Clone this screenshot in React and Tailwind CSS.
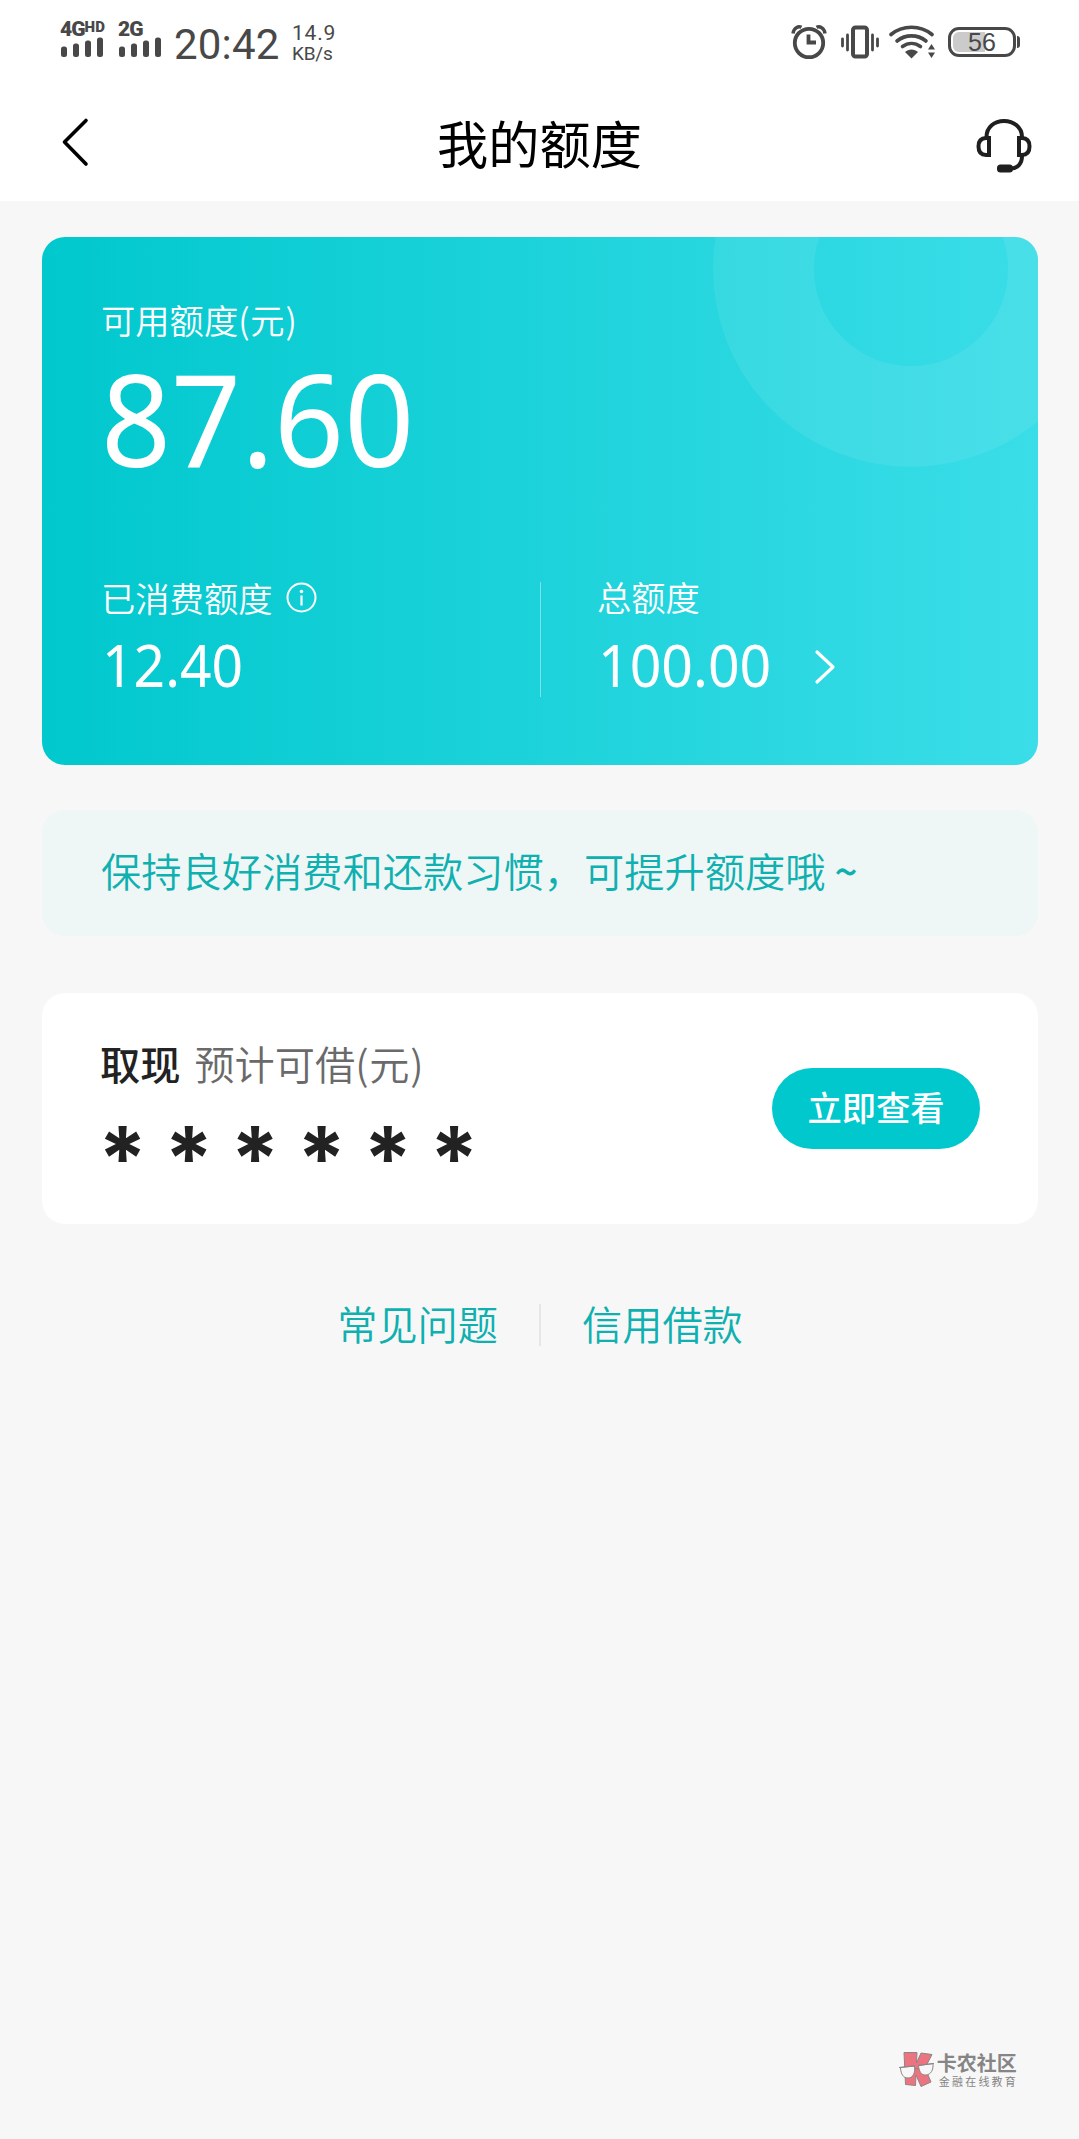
const SignalBars = () => (
  <svg width="44" height="20" viewBox="0 0 44 20" fill="#484848">
    <rect x="1" y="9.5" width="6" height="10.5" rx="2.5" />
    <rect x="13" y="6.5" width="6" height="13.5" rx="2.5" />
    <rect x="25" y="3.5" width="6" height="16.5" rx="2.5" />
    <rect x="37" y="0.5" width="6" height="19.5" rx="2.5" />
  </svg>
)

const AlarmIcon = () => (
  <svg width="36" height="36" viewBox="0 0 36 36" fill="none" stroke="#484848">
    <circle cx="18" cy="19" r="14.2" strokeWidth="3.8" />
    <path d="M17.5 10.5V18.5H25" strokeWidth="3.8" />
    <path d="M2 9.5C2.5 4.5 7 1.5 10.5 3.2M34 9.5C33.5 4.5 29 1.5 25.5 3.2" strokeWidth="3.4" />
  </svg>
)

const VibrateIcon = () => (
  <svg width="38" height="36" viewBox="0 0 38 36" fill="none" stroke="#484848">
    <rect x="12" y="3.5" width="14" height="29" rx="2.5" strokeWidth="4" />
    <path d="M1.5 15v7M36.5 15v7M6.5 11v15M31.5 11v15" strokeWidth="2.8" strokeLinecap="round" />
  </svg>
)

const WifiIcon = () => (
  <svg width="47" height="36" viewBox="0 0 47 36" fill="none" stroke="#484848">
    <path d="M2 10.5C13.5 0.8 31.5 0.8 43 10.5" strokeWidth="3.6" strokeLinecap="round" />
    <path d="M8 17C16.5 10.2 28.5 10.2 37 17" strokeWidth="3.6" strokeLinecap="round" />
    <path d="M13.5 22.5C19 18.5 26 18.5 31.5 22.5" strokeWidth="3.6" strokeLinecap="round" />
    <path d="M16 28C19.5 24.5 25.5 24.5 29 28L22.5 34.5Z" fill="#484848" stroke="none" />
    <path d="M39 25.5L42.5 20L46 25.5ZM39 28.5L42.5 34L46 28.5Z" fill="#484848" stroke="none" />
  </svg>
)

const HeadsetIcon = () => (
  <svg width="58" height="56" viewBox="0 0 58 56" fill="none" stroke="#1f1f1f" strokeWidth="4">
    <path d="M11.5 19C11.5 9 19.5 3 29 3S47 9 47 19" />
    <path d="M14 20H11C6 20 3.5 23 3.5 28.5S6 37 11 37H14Z" />
    <path d="M44 20H47C52 20 54.5 23 54.5 28.5S52 37 47 37H44Z" />
    <path d="M47 38C47 46 42.5 50 36 50.5" />
    <rect x="22" y="46.5" width="16" height="8" rx="3.5" fill="#1f1f1f" stroke="none" />
  </svg>
)

const InfoIcon = () => (
  <svg width="31" height="31" viewBox="0 0 31 31" fill="none" stroke="#fff">
    <circle cx="15.5" cy="15.5" r="14" strokeWidth="2" />
    <path d="M15.5 13.5V23.5" strokeWidth="2.2" />
    <circle cx="15.5" cy="9.5" r="1.8" fill="#fff" stroke="none" />
  </svg>
)

const GlassesLogo = () => (
  <svg width="36" height="38" viewBox="0 0 36 38" stroke="#8d8585" strokeWidth="1">
    <path d="M5 1.5H18L17.5 12L22 2L33 3.5L26 17L32 31L22 35.5L17 24L16.5 34.5L6.5 33.5Z" fill="#ec7380" />
    <path d="M1 16.5L15.5 15C16.5 22 14 27 9 27S2 23 1.5 17Z" fill="#f7f7f7" />
    <path d="M19.5 14.5L34 12.5C34.5 19 32 23.5 27 24S20 20 19.5 14.5Z" fill="#f7f7f7" />
    <path d="M0 16.5L16 15M19 14.5L35 12.5M15.5 18L20 17.5" fill="none" />
  </svg>
)

const StatusBar = () => (
  <div className="flex h-[84px] items-start justify-between pl-[60px] pr-[59px] text-[#484848]">
    <div className="flex items-start">
      <div className="flex w-[58px] flex-col pt-[21px]">
        <div className="flex h-4 items-start font-[Roboto] text-[21px] leading-[17px] font-black tracking-[-1px]">
          4G<span className="text-[15px] leading-[12px] tracking-[0.3px]">HD</span>
        </div>
        <SignalBars />
      </div>
      <div className="flex w-[56px] flex-col pt-[21px]">
        <div className="h-4 font-[Roboto] text-[21px] leading-[17px] font-black tracking-[-1px]">2G</div>
        <SignalBars />
      </div>
      <div className="w-[118px] pt-5 font-[Roboto] text-[42px] leading-[49px] tracking-[0.2px]">20:42</div>
      <div className="pt-[22px] font-[Roboto]">
        <div className="text-[21px] leading-[23px] tracking-[0.8px]">14.9</div>
        <div className="text-[19px] leading-[17px] tracking-[-0.2px]">KB/s</div>
      </div>
    </div>
    <div className="flex items-start pt-6">
      <div className="w-[50px]"><AlarmIcon /></div>
      <div className="w-[48px]"><VibrateIcon /></div>
      <div className="w-[59px]"><WifiIcon /></div>
      <div className="flex items-center pt-[3px]">
        <div className="flex h-[30px] w-[68px] items-center rounded-[11px] border-[3px] border-[#484848] p-0.5">
          <div className="h-full w-[32px] rounded-l-[6px] bg-[#cbcbcb]" />
          <span className="-ml-[17px] font-['Liberation_Sans'] text-[25px] leading-[26px]">56</span>
        </div>
        <div className="ml-px h-3 w-[3px] rounded-r-full bg-[#484848]" />
      </div>
    </div>
  </div>
)

const App = () => {
  return (
    <div className="flex min-h-[2139px] w-full flex-col bg-[#f7f7f7] font-['Noto_Sans_CJK_SC','Noto_Sans',sans-serif]">
      <header className="h-[201px] bg-white">
        <StatusBar />
        <div className="flex h-[117px] items-start justify-between pl-[60px] pr-[46px]">
          <svg className="mt-[33px]" width="58" height="50" viewBox="0 0 58 50" fill="none" stroke="#000" strokeWidth="3.6" strokeLinecap="round" strokeLinejoin="round">
            <path d="M26 3.5L4.5 25L26 47" />
          </svg>
          <h1 className="mt-[22px] mr-[14px] text-[51.2px] leading-[72px] text-black">我的额度</h1>
          <div className="mt-[34px]"><HeadsetIcon /></div>
        </div>
      </header>

      <main className="flex flex-col pl-[42px] pr-[41px] pt-9">
        <section className="relative h-[528px] overflow-hidden rounded-[23px] bg-linear-to-r/srgb from-[#00c8cd] to-[#3adde8] text-white">
          <div className="absolute left-[671px] top-[-166px] h-[396px] w-[396px] rounded-full border-[101px] border-white/8" />
          <div className="relative px-[59px] pt-[58px]">
            <div className="text-[34.3px] leading-[48px] font-[350]">
              可用额度<span className="tracking-[0.8px]">(元)</span>
            </div>
            <div className="mt-[-3px] origin-left scale-y-[1.04] font-['Noto_Sans'] text-[122.6px] leading-[156px]">87.60</div>
            <div className="flex pt-[86px]">
              <div className="w-[439px]">
                <div className="flex items-center gap-[13px] text-[34.3px] leading-[25px] font-[350]">
                  已消费额度 <InfoIcon />
                </div>
                <div className="mt-[14px] ml-px origin-left scale-y-[1.06] font-['Noto_Sans'] text-[55.2px] leading-[76px]">12.40</div>
              </div>
              <div className="h-[115px] w-px bg-white/40" />
              <div className="pl-[56px]">
                <div className="text-[34.3px] leading-[29px] font-[350]">总额度</div>
                <div className="mt-[16px] flex items-center">
                  <div className="ml-px origin-left scale-y-[1.06] font-['Noto_Sans'] text-[55.4px] leading-[76px]">100.00</div>
                  <svg className="ml-[43px] mt-1" width="22" height="36" viewBox="0 0 22 36" fill="none" stroke="#fff" strokeWidth="3.2" strokeLinecap="round" strokeLinejoin="round">
                    <path d="M3 3L19 18L3 33" />
                  </svg>
                </div>
              </div>
            </div>
          </div>
        </section>

        <section className="mt-[45px] h-[126px] rounded-[23px] bg-[#eef6f6] px-[59px] pt-[32px] text-[40.25px] leading-[56px] font-[350] text-[#0fb0b0]">
          保持良好消费和还款习惯，可提升额度哦 <span className="font-medium">~</span>
        </section>

        <section className="mt-[57px] flex h-[231px] items-center justify-between rounded-[23px] bg-white pl-[58px] pr-[58px]">
          <div className="flex h-full flex-col pt-[41px]">
            <div className="flex items-center gap-[14px] text-[40.2px] leading-[58px]">
              <span className="font-medium text-[#222]">取现</span>
              <span className="font-[350] text-[#6a6a6a]">
                预计可借<span className="tracking-[0.8px]">(元)</span>
              </span>
            </div>
            <div className="-ml-0.5 mt-[21px] flex h-[90px] font-[Inter] text-[88px] leading-[90px] font-bold text-[#222]">
              {[0, 1, 2, 3, 4, 5].map((i) => (
                <span key={i} className="w-[66.3px]">*</span>
              ))}
            </div>
          </div>
          <button className="h-[81px] w-[208px] rounded-full bg-[#00c8cd] pb-[3px] text-[34.3px] font-medium text-white">立即查看</button>
        </section>

        <nav className="mt-[71px] flex items-center justify-center text-[40.2px] leading-[56px] font-[350] text-[#0fb0b0]">
          <a>常见问题</a>
          <div className="mx-[41px] mt-1 h-[42px] w-0.5 bg-[#e6e6e6]" />
          <a>信用借款</a>
        </nav>
      </main>

      <footer className="mt-auto flex items-start justify-end pb-[50px] pr-[61px]">
        <GlassesLogo />
        <div className="ml-0.5 text-[#858585]">
          <div className="text-[20px] leading-[23px] font-bold">卡农社区</div>
          <div className="pl-0.5 text-[11px] leading-[14px] tracking-[2.2px]">金融在线教育</div>
        </div>
      </footer>
    </div>
  )
}

export default App
